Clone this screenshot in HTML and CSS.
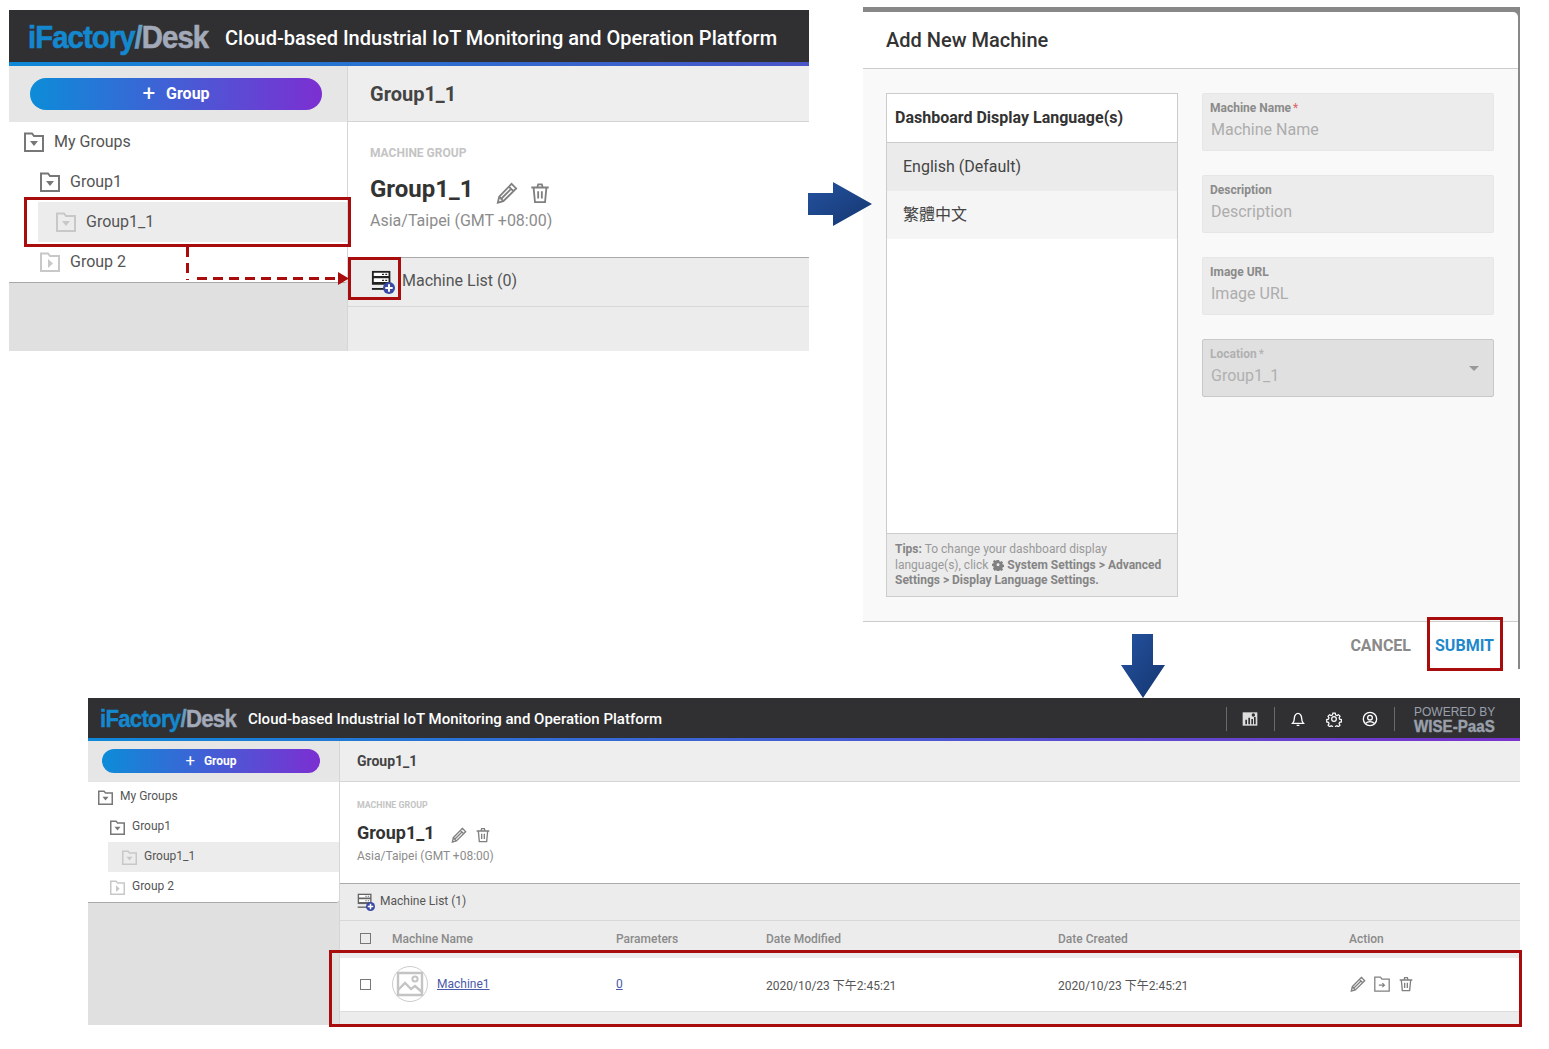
FILE: index.html
```html
<!DOCTYPE html>
<html>
<head>
    <meta name="viewport" content="width=device-width, initial-scale=1">
    <title>Add New Machine</title>
    <link rel="stylesheet" href="styles.css">
</head>
<body>
    <svg class="sprite" width="0" height="0">
        <symbol id="folder-open" viewBox="0 0 20 20"><path d="M1 19V1.500h7L10 4h9v15z" fill="none" stroke="currentColor" stroke-width="2"/><path d="M6 9h8l-4 5z" fill="currentColor"/></symbol>
        <symbol id="folder-closed" viewBox="0 0 20 20"><path d="M1 19V1.500h7L10 4h9v15z" fill="none" stroke="currentColor" stroke-width="2"/><path d="M8 7l5 4.500L8 16z" fill="currentColor"/></symbol>
        <symbol id="pencil" viewBox="0 0 24 24"><path d="M17 2l5 5L8 21l-6 1.500L3.500 16zM14 5l5 5M3.500 16L8 21M6 18L16.500 7.500" fill="none" stroke="currentColor" stroke-width="2"/></symbol>
        <symbol id="trash" viewBox="0 0 24 24"><path d="M2.500 6h19M9 6l1-3.500h4l1 3.500M5 6l1.500 16h11L19 6M10 10v8M14 10v8" fill="none" stroke="currentColor" stroke-width="2"/></symbol>
        <symbol id="machine-add" viewBox="0 0 26 26"><path d="M1 1h20v15H1z" fill="currentColor"/><path d="M3 3h16v3.500H3zM3 9h16v4H3z" fill="#fff"/><path d="M12 4h2v1.500h-2zM15.500 4h2v1.500h-2zM12 10.500h2V12h-2zM15.500 10.500h2V12h-2z" fill="currentColor"/><path d="M1 20.500h15" stroke="currentColor" stroke-width="2"/><circle cx="19.500" cy="19.500" r="6.500" fill="#3949a3"/><path d="M19.500 15.500v8M15.500 19.500h8" stroke="#fff" stroke-width="2.200"/></symbol>
        <symbol id="move" viewBox="0 0 20 20"><path d="M1 19V1.500h7L10 4h9v15z" fill="none" stroke="currentColor" stroke-width="1.600"/><path d="M6 11.500h7M10.500 9l2.500 2.500-2.500 2.500" fill="none" stroke="currentColor" stroke-width="1.500"/></symbol>
        <symbol id="gear" viewBox="0 0 24 24"><path d="M10 2h4l.6 3 2.400 1.100 2.600-1.600 2.700 2.900-1.700 2.500.9 2.300 3 .7v4l-3 .7-1 2.300 1.700 2.500-2.800 2.800-2.500-1.700-2.300 1-.6 3h-4l-.6-3-2.300-1-2.500 1.700-2.800-2.800 1.700-2.500-1-2.300-3-.7v-4l3-.7.9-2.300-1.700-2.500 2.700-2.900 2.600 1.600L9.400 5z" transform="translate(1.500 1.500) scale(.88)" fill="none" stroke="currentColor" stroke-width="2"/><circle cx="12" cy="12" r="3.500" fill="none" stroke="currentColor" stroke-width="1.800"/></symbol>
        <symbol id="gear-solid" viewBox="0 0 24 24"><path fill-rule="evenodd" d="M9.500 1h5l.7 3.200 2.400 1 2.800-1.800 3.500 3.500-1.800 2.800 1 2.400 3.200.7v5l-3.200.7-1 2.400 1.800 2.800-3.500 3.500-2.800-1.800-2.400 1-.7 3.200h-5l-.7-3.200-2.400-1-2.800 1.800L-.1 21.200l1.800-2.800-1-2.400L-2.500 15.300v-5l3.200-.7 1-2.400L-.1 4.400 3.400.9l2.800 1.800 2.400-1zM12 9a3.500 3.500 0 1 0 0 7 3.500 3.500 0 0 0 0-7z" transform="translate(2 1) scale(.84)" fill="currentColor"/></symbol>
        <symbol id="bell" viewBox="0 0 24 24"><path d="M4 18.500c2-2 2.500-3.500 2.500-7.500S9 3.500 12 3.500s5.500 3.500 5.500 7.500.5 5.500 2.500 7.500zM10 21.500h4" fill="none" stroke="currentColor" stroke-width="2"/></symbol>
        <symbol id="user" viewBox="0 0 24 24"><circle cx="12" cy="12" r="10" fill="none" stroke="currentColor" stroke-width="2"/><circle cx="12" cy="10" r="3.500" fill="none" stroke="currentColor" stroke-width="2"/><path d="M5.500 18.500c3-3.500 10-3.500 13 0" fill="none" stroke="currentColor" stroke-width="2"/></symbol>
        <symbol id="chart" viewBox="0 0 24 24"><path d="M1 2h22v20H1z" fill="currentColor"/><path d="M5 13h2.500v7H5zM9.500 10H12v10H9.500zM14 12h2.500v8H14zM18 9h2.500v11H18z" fill="#303033"/><circle cx="17" cy="6" r="2.500" fill="#303033"/></symbol>
        <symbol id="picture" viewBox="0 0 28 28"><path d="M2 3h24v22H2z" fill="none" stroke="currentColor" stroke-width="2.400"/><path d="M2 20l7-7 6 6 4-3 7 6" fill="none" stroke="currentColor" stroke-width="2.400"/><circle cx="19" cy="9" r="2.600" fill="none" stroke="currentColor" stroke-width="2"/></symbol>
    </svg>

    <main class="canvas">

        <!-- step 1: group page -->
        <section class="app app-large">
            <header class="topbar">
                <div class="logo"><span class="logo-text"><b>iFactory</b><u>/</u><i>Desk</i></span></div>
                <div class="tagline">Cloud-based Industrial IoT Monitoring and Operation Platform</div>
            </header>
            <div class="app-body">
                <aside class="sidebar">
                    <div class="sidebar-top"><button class="add-group"><span class="plus">+</span>Group</button></div>
                    <ul class="tree">
                        <li class="level-0"><svg class="folder"><use href="#folder-open"/></svg>My Groups</li>
                        <li class="level-1"><svg class="folder"><use href="#folder-open"/></svg>Group1</li>
                        <li class="level-2 selected"><svg class="folder"><use href="#folder-open"/></svg>Group1_1</li>
                        <li class="level-1 muted"><svg class="folder"><use href="#folder-closed"/></svg>Group 2</li>
                    </ul>
                </aside>
                <div class="content">
                    <div class="crumb">Group1_1</div>
                    <div class="group-info">
                        <div class="eyebrow">MACHINE GROUP</div>
                        <div class="group-title">Group1_1<svg class="tool"><use href="#pencil"/></svg><svg class="tool"><use href="#trash"/></svg></div>
                        <div class="timezone">Asia/Taipei (GMT +08:00)</div>
                    </div>
                    <div class="list-head"><svg class="machine-icon"><use href="#machine-add"/></svg>Machine List (0)</div>
                </div>
            </div>
        </section>

        <!-- step 2: dialog -->
        <section class="dialog">
            <h2 class="dialog-title">Add New Machine</h2>
            <div class="dialog-body">
                <div class="lang-box">
                    <div class="lang-head">Dashboard Display Language(s)</div>
                    <div class="lang-item current">English (Default)</div>
                    <div class="lang-item cjk">繁體中文</div>
                    <div class="lang-fill"></div>
                    <div class="lang-tips">
                        <div><b>Tips:</b> To change your dashboard display</div>
                        <div>language(s), click <svg class="tips-gear"><use href="#gear-solid"/></svg> <b>System Settings &gt; Advanced</b></div>
                        <div><b>Settings &gt; Display Language Settings.</b></div>
                    </div>
                </div>
                <div class="fields">
                    <div class="field"><label>Machine Name<em>*</em></label><span>Machine Name</span></div>
                    <div class="field"><label>Description</label><span>Description</span></div>
                    <div class="field"><label>Image URL</label><span>Image URL</span></div>
                    <div class="field locked"><label>Location<em>*</em></label><span>Group1_1</span><i class="caret"></i></div>
                </div>
            </div>
            <footer class="dialog-foot">
                <button class="btn-cancel">CANCEL</button>
                <button class="btn-submit">SUBMIT</button>
            </footer>
        </section>

        <!-- step 3: result -->
        <section class="app app-small">
            <header class="topbar">
                <div class="logo"><span class="logo-text"><b>iFactory</b><u>/</u><i>Desk</i></span></div>
                <div class="tagline">Cloud-based Industrial IoT Monitoring and Operation Platform</div>
                <div class="top-actions">
                    <span class="sep"></span>
                    <svg class="top-icon chart-icon"><use href="#chart"/></svg>
                    <span class="sep"></span>
                    <svg class="top-icon"><use href="#bell"/></svg>
                    <svg class="top-icon"><use href="#gear"/></svg>
                    <svg class="top-icon"><use href="#user"/></svg>
                    <span class="sep"></span>
                    <div class="powered"><small>POWERED BY</small><strong>WISE-PaaS</strong></div>
                </div>
            </header>
            <div class="app-body">
                <aside class="sidebar">
                    <div class="sidebar-top"><button class="add-group"><span class="plus">+</span>Group</button></div>
                    <ul class="tree">
                        <li class="level-0"><svg class="folder"><use href="#folder-open"/></svg>My Groups</li>
                        <li class="level-1"><svg class="folder"><use href="#folder-open"/></svg>Group1</li>
                        <li class="level-2 selected"><svg class="folder"><use href="#folder-open"/></svg>Group1_1</li>
                        <li class="level-1 muted"><svg class="folder"><use href="#folder-closed"/></svg>Group 2</li>
                    </ul>
                </aside>
                <div class="content">
                    <div class="crumb">Group1_1</div>
                    <div class="group-info">
                        <div class="eyebrow">MACHINE GROUP</div>
                        <div class="group-title">Group1_1<svg class="tool"><use href="#pencil"/></svg><svg class="tool"><use href="#trash"/></svg></div>
                        <div class="timezone">Asia/Taipei (GMT +08:00)</div>
                    </div>
                    <div class="list-head"><svg class="machine-icon"><use href="#machine-add"/></svg>Machine List (1)</div>
                    <div class="table-row table-head">
                        <span class="check"></span>
                        <span>Machine Name</span>
                        <span>Parameters</span>
                        <span>Date Modified</span>
                        <span>Date Created</span>
                        <span>Action</span>
                    </div>
                    <div class="table-row table-data">
                        <span class="check"></span>
                        <span class="machine-cell"><span class="thumb"><svg><use href="#picture"/></svg></span><a href="#">Machine1</a></span>
                        <span><a href="#">0</a></span>
                        <span>2020/10/23 下午2:45:21</span>
                        <span>2020/10/23 下午2:45:21</span>
                        <span class="row-tools"><svg><use href="#pencil"/></svg><svg><use href="#move"/></svg><svg><use href="#trash"/></svg></span>
                    </div>
                </div>
            </div>
        </section>

        <!-- annotations -->
        <div class="mark mark-selected"></div>
        <div class="mark mark-icon"></div>
        <div class="mark mark-submit"></div>
        <div class="mark mark-row"></div>

        <svg class="overlay" width="1549" height="1049">
            <defs>
                <linearGradient id="arrow-fill" x1="0" y1="0" x2="1" y2="1">
                    <stop offset="0" stop-color="#2452a0"/>
                    <stop offset="1" stop-color="#15366f"/>
                </linearGradient>
            </defs>
            <path d="M187.500 247v33M197 278.500h141" fill="none" stroke="#a80c0c" stroke-width="3" stroke-dasharray="10 6"/>
            <path d="M338 272l11 6.500-11 6.500z" fill="#a80c0c"/>
            <path d="M808 193h25v-11l39 22-39 22v-11h-25z" fill="url(#arrow-fill)"/>
            <path d="M1132 634h21v31h12l-22 33-22-33h11z" fill="url(#arrow-fill)"/>
        </svg>
    </main>
</body>
</html>
```

FILE: styles.css
```css
html, body {
    margin: 0;
    background: #fff;
    font-family: Roboto, "Noto Sans CJK TC", sans-serif;
}

.sprite {
    position: absolute;
}

.canvas {
    position: relative;
    width: 1549px;
    height: 1049px;
    overflow: hidden;
}

button {
    font-family: inherit;
    border: 0;
    background: none;
    padding: 0;
}

/* app screens */
.app {
    position: absolute;
    display: flex;
    flex-direction: column;
    overflow: hidden;
    background: #e0e0e0;
}

.app-large {
    left: 9px;
    top: 10px;
    width: 800px;
    height: 341px;
}

.app-small {
    left: 88px;
    top: 698px;
    width: 1432px;
    height: 327px;
}

.topbar {
    display: flex;
    align-items: center;
    background: #303033;
    flex: none;
    box-sizing: border-box;
}

.app-large .topbar {
    height: 56px;
    border-bottom: 4px solid;
    border-image: linear-gradient(90deg, #0e88d8, #4a55c8) 1;
}

.app-small .topbar {
    height: 43px;
    border-bottom: 3px solid;
    border-image: linear-gradient(90deg, #0e88d8, #7a33cc) 1;
}

.logo {
    flex: none;
}

.logo-text {
    display: inline-block;
    font-family: "Liberation Sans", sans-serif;
    font-weight: 700;
    transform-origin: left center;
    white-space: nowrap;
}

.logo-text b {
    color: #1488cf;
}

.logo-text u {
    text-decoration: none;
    color: #6b9dc0;
}

.logo-text i {
    font-style: normal;
    color: #a2a9b8;
}

.app-large .logo {
    width: 197px;
    margin-left: 19px;
    padding-top: 2px;
}

.app-large .logo-text {
    font-size: 32px;
    letter-spacing: -1px;
    -webkit-text-stroke: 0.6px;
    transform: scaleX(0.915);
}

.app-small .logo {
    width: 148px;
    margin-left: 12px;
    padding-top: 1px;
}

.app-small .logo-text {
    font-size: 24px;
    letter-spacing: -0.8px;
    -webkit-text-stroke: 0.4px;
    transform: scaleX(0.925);
}

.tagline {
    color: #fff;
    font-weight: 500;
    white-space: nowrap;
}

.app-large .tagline {
    font-size: 20px;
    padding-top: 4px;
}

.app-small .tagline {
    font-size: 15px;
    padding-top: 2px;
}

.top-actions {
    display: flex;
    align-items: center;
    margin-left: auto;
    color: #fff;
}

.sep {
    width: 1px;
    height: 24px;
    margin-top: 2px;
    background: #6a6a6a;
}

.top-icon {
    width: 16px;
    height: 16px;
    margin: 2px 10px 0;
}

.chart-icon {
    margin: 2px 16px 0 15px;
    color: #ddd;
}

.top-actions .sep:nth-of-type(2) + .top-icon {
    margin-left: 15px;
}

.top-icon:last-of-type {
    margin-right: 16px;
}

.powered {
    width: 81px;
    margin: 0 25px 0 19px;
    padding-top: 4px;
    color: #9aa0ab;
    line-height: 1;
}

.powered small {
    display: block;
    font-size: 12px;
    font-family: "Liberation Sans", sans-serif;
    white-space: nowrap;
}

.powered strong {
    display: block;
    font-family: "Liberation Sans", sans-serif;
    font-size: 17px;
    -webkit-text-stroke: 0.4px;
    transform: scaleX(0.89);
    transform-origin: left center;
    white-space: nowrap;
}

.app-body {
    flex: 1;
    display: flex;
    min-height: 0;
}

.sidebar {
    flex: none;
    background: #e0e0e0;
}

.app-large .sidebar {
    width: 338px;
}

.app-small .sidebar {
    width: 251px;
}

.sidebar-top {
    display: flex;
    align-items: center;
    box-sizing: border-box;
    background: #e6e6e6;
}

.app-large .sidebar-top {
    height: 56px;
    padding-left: 21px;
}

.app-small .sidebar-top {
    height: 41px;
    padding: 0 0 2px 14px;
}

.add-group {
    color: #fff;
    font-weight: 700;
    background: linear-gradient(90deg, #0c8cd8, #7c2fd2);
    border-radius: 20px;
}

.app-large .add-group {
    width: 292px;
    height: 32px;
    padding-bottom: 2px;
    font-size: 16px;
}

.app-small .add-group {
    width: 218px;
    height: 24px;
    padding-bottom: 1px;
    font-size: 12px;
}

.plus {
    font-weight: 400;
    margin-right: 9px;
    font-size: 1.4em;
    line-height: 1;
    vertical-align: -0.08em;
}

.app-large .plus {
    margin-right: 11px;
}

.tree {
    list-style: none;
    margin: 0;
    padding: 0;
    background: #fff;
    color: #555;
    border-bottom: 1px solid #a8a8a8;
    border-radius: 0 0 3px 0;
}

.tree li {
    display: flex;
    align-items: center;
    box-sizing: border-box;
    padding-bottom: 2px;
}

.tree .folder {
    flex: none;
    color: #777;
    margin-top: 2px;
}

.tree .selected {
    background: #ececec;
}

.tree .selected .folder,
.tree .muted .folder {
    color: #c8c8c8;
}

.app-large .tree {
    font-size: 16px;
}

.app-large .tree li {
    height: 40px;
}

.app-large .folder {
    width: 20px;
    height: 20px;
    margin-right: 10px;
}

.app-large .level-0 {
    padding-left: 15px;
}

.app-large .level-1 {
    padding-left: 31px;
}

.app-large .level-2 {
    margin-left: 29px;
    padding-left: 18px;
}

.app-small .tree {
    font-size: 12px;
}

.app-small .tree li {
    height: 30px;
}

.app-small .folder {
    width: 15px;
    height: 15px;
    margin-right: 7px;
}

.app-small .level-0 {
    padding-left: 10px;
}

.app-small .level-1 {
    padding-left: 22px;
}

.app-small .level-2 {
    margin-left: 20px;
    padding-left: 14px;
}

/* right side of the screens */
.content {
    flex: 1;
    min-width: 0;
    background: #ececec;
    border-left: 1px solid #d6d6d6;
    color: #333;
}

.crumb {
    display: flex;
    align-items: center;
    box-sizing: border-box;
    background: #eee;
    border-bottom: 1px solid #d4d4d4;
    font-weight: 700;
    color: #444;
}

.group-info {
    background: #fff;
    box-sizing: border-box;
    border-bottom: 1px solid #aaa;
}

.eyebrow {
    color: #c4c4c4;
    font-weight: 700;
}

.group-title {
    display: flex;
    align-items: center;
    font-weight: 700;
    color: #333;
}

.tool {
    color: #808080;
}

.timezone {
    color: #8c8c8c;
}

.list-head {
    display: flex;
    align-items: center;
    box-sizing: border-box;
    border-bottom: 1px solid #d8d8d8;
    color: #555;
}

.app-large .crumb {
    height: 56px;
    padding-left: 22px;
    font-size: 20px;
}

.app-large .group-info {
    height: 136px;
    padding: 24px 0 0 22px;
}

.app-large .eyebrow {
    font-size: 12px;
    line-height: 14px;
}

.app-large .group-title {
    font-size: 24px;
    line-height: 30px;
    margin-top: 14px;
}

.app-large .tool {
    width: 22px;
    height: 22px;
    margin-top: 8px;
}

.app-large .tool:first-of-type {
    margin-left: 22px;
    margin-right: 11px;
}

.app-large .timezone {
    font-size: 16px;
    line-height: 20px;
    margin-top: 7px;
}

.app-large .list-head {
    height: 49px;
    padding: 0 0 4px 23px;
    font-size: 16px;
}

.app-large .machine-icon {
    width: 24px;
    height: 24px;
    margin-right: 7px;
    margin-top: 4px;
    color: #222;
}

.app-small .crumb {
    height: 41px;
    padding-left: 17px;
    font-size: 14px;
}

.app-small .group-info {
    height: 102px;
    padding: 17px 0 0 17px;
}

.app-small .eyebrow {
    font-size: 8.800px;
    line-height: 12px;
}

.app-small .group-title {
    font-size: 18px;
    line-height: 22px;
    margin-top: 11px;
}

.app-small .tool {
    width: 16px;
    height: 16px;
    margin-top: 4px;
}

.app-small .tool:first-of-type {
    margin-left: 16px;
    margin-right: 8px;
}

.app-small .timezone {
    font-size: 12px;
    line-height: 16px;
    margin-top: 4px;
}

.app-small .list-head {
    height: 37px;
    padding: 0 0 3px 17px;
    font-size: 12px;
}

.app-small .machine-icon {
    width: 18px;
    height: 18px;
    margin-right: 5px;
    margin-top: 3px;
    color: #666;
}

/* machine table */
.table-row {
    display: grid;
    grid-template-columns: 32px 224px 150px 292px 291px 1fr;
    align-items: center;
    padding-left: 20px;
    font-size: 12px;
    box-sizing: border-box;
}

.check {
    display: block;
    width: 11px;
    height: 11px;
    box-sizing: border-box;
    border: 1.500px solid #777;
}

.table-head {
    height: 37px;
    color: #8a8a8a;
    font-weight: 500;
    padding-bottom: 2px;
}

.table-data {
    height: 54px;
    padding-bottom: 1px;
    background: #fff;
    border-bottom: 1px solid #ddd;
    color: #555;
}

.table-row a {
    color: #4a5aa8;
}

.machine-cell {
    display: flex;
    align-items: center;
}

.thumb {
    display: flex;
    align-items: center;
    justify-content: center;
    width: 34px;
    height: 34px;
    border: 1px solid #ccc;
    border-radius: 50%;
    margin-right: 9px;
    color: #c4c4c4;
}

.thumb svg {
    width: 28px;
    height: 28px;
}

.row-tools {
    display: flex;
    gap: 8px;
    padding-left: 1px;
    color: #808080;
}

.row-tools svg {
    width: 16px;
    height: 16px;
}

/* dialog */
.dialog {
    position: absolute;
    left: 863px;
    top: 7px;
    width: 657px;
    height: 662px;
    box-sizing: border-box;
    display: flex;
    flex-direction: column;
    background: #888;
    border-top: 5px solid #888;
    border-right: 2px solid #888;
}

.dialog-title {
    margin: 0;
    flex: none;
    height: 57px;
    box-sizing: border-box;
    padding: 12px 0 0 23px;
    font-size: 20px;
    line-height: 32px;
    font-weight: 500;
    color: #333;
    background: #fff;
    border-bottom: 1px solid #ccc;
    border-radius: 0 5px 0 0;
}

.dialog-body {
    flex: 1;
    display: flex;
    gap: 24px;
    box-sizing: border-box;
    padding: 24px 0 24px 23px;
    background: #f9f9f9;
    min-height: 0;
}

.lang-box {
    width: 292px;
    box-sizing: border-box;
    border: 1px solid #ccc;
    background: #fff;
    display: flex;
    flex-direction: column;
}

.lang-head {
    height: 49px;
    flex: none;
    box-sizing: border-box;
    padding: 0 0 1px 8px;
    display: flex;
    align-items: center;
    font-size: 16px;
    font-weight: 700;
    color: #333;
    border-bottom: 1px solid #ccc;
}

.lang-item {
    height: 48px;
    flex: none;
    box-sizing: border-box;
    display: flex;
    align-items: center;
    padding: 0 0 2px 16px;
    font-size: 16px;
    color: #444;
    background: #f5f5f5;
}

.lang-item.cjk {
    padding-bottom: 4px;
}

.lang-item.current {
    background: #ebebeb;
}

.lang-fill {
    flex: 1;
}

.lang-tips {
    height: 63px;
    flex: none;
    box-sizing: border-box;
    padding: 8px 8px 0;
    font-size: 12px;
    line-height: 15.500px;
    color: #999;
    background: #ececec;
    border-top: 1px solid #ccc;
}

.lang-tips b {
    color: #858585;
}

.tips-gear {
    width: 12px;
    height: 12px;
    margin-left: 1px;
    vertical-align: -2px;
    color: #808080;
}

.fields {
    display: flex;
    flex-direction: column;
    gap: 24px;
}

.field {
    position: relative;
    width: 292px;
    height: 58px;
    box-sizing: border-box;
    padding: 7px 7px 0;
    background: #ececec;
    border: 1px solid #e6e6e6;
    border-radius: 2px;
}

.field label {
    display: block;
    font-size: 12px;
    line-height: 14px;
    font-weight: 700;
    color: #8a8a8a;
}

.field em {
    color: #e06060;
    font-style: normal;
    font-weight: 400;
    margin-left: 2px;
}

.field span {
    display: block;
    font-size: 16px;
    line-height: 22px;
    margin: 4px 0 0 1px;
    color: #adadad;
}

.field.locked {
    background: #e0e0e0;
    border-color: #c8c8c8;
}

.field.locked label,
.field.locked span,
.field.locked em {
    color: #b0b0b0;
}

.caret {
    position: absolute;
    right: 14px;
    top: 26px;
    border-left: 5px solid transparent;
    border-right: 5px solid transparent;
    border-top: 5px solid #999;
}

.dialog-foot {
    flex: none;
    height: 48px;
    box-sizing: border-box;
    display: flex;
    align-items: center;
    justify-content: flex-end;
    gap: 24px;
    padding-right: 24px;
    background: #fff;
    border-top: 1px solid #ccc;
}

.btn-cancel {
    color: #8a8a8a;
    font-size: 16px;
    font-weight: 700;
}

.btn-submit {
    color: #1f88cc;
    font-size: 16px;
    font-weight: 700;
}

/* red annotations over the screens */
.mark {
    position: absolute;
    box-sizing: border-box;
    border: 3px solid #a80c0c;
}

.mark-selected {
    left: 24px;
    top: 197px;
    width: 327px;
    height: 50px;
}

.mark-icon {
    left: 348px;
    top: 257px;
    width: 53px;
    height: 43px;
}

.mark-submit {
    left: 1427px;
    top: 617px;
    width: 76px;
    height: 54px;
}

.mark-row {
    left: 329px;
    top: 950px;
    width: 1193px;
    height: 77px;
}

.overlay {
    position: absolute;
    left: 0;
    top: 0;
}
```
